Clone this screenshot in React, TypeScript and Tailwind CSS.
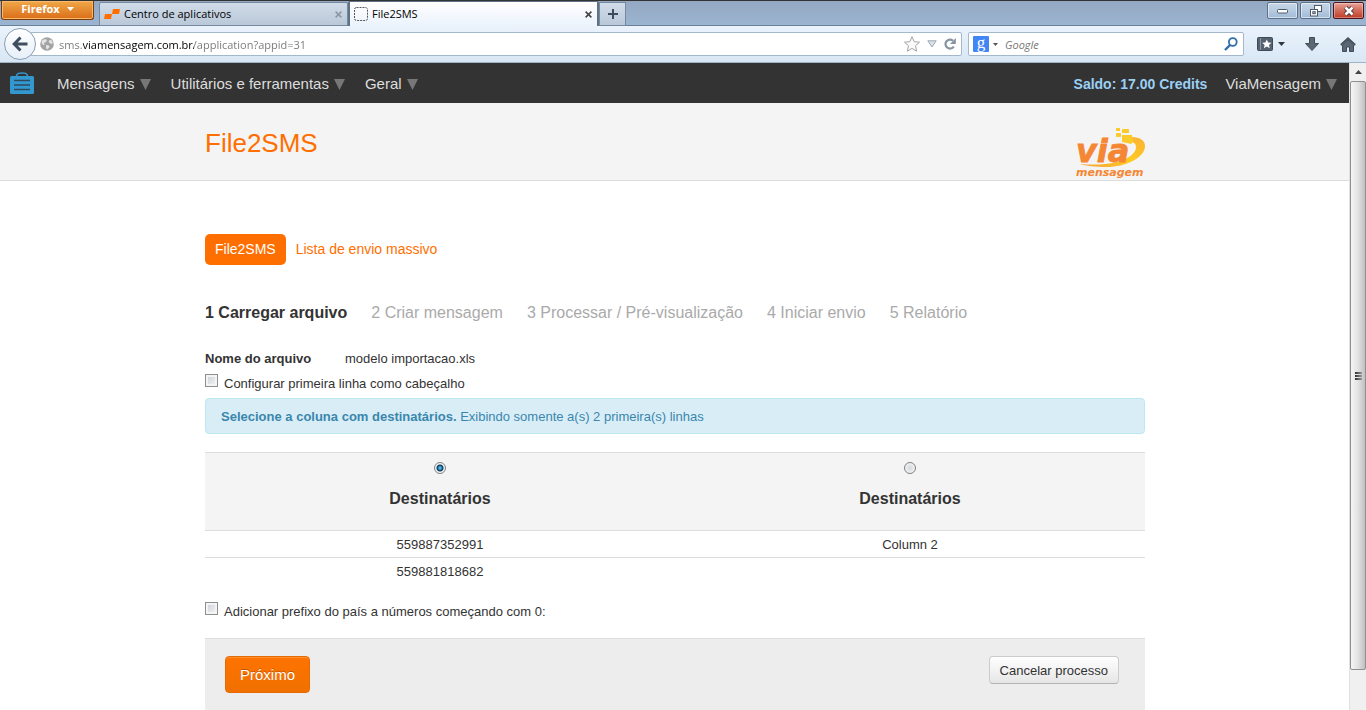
import type { ReactNode } from "react";

const menus = ["Mensagens", "Utilitários e ferramentas", "Geral"];

const steps = [
  "1 Carregar arquivo",
  "2 Criar mensagem",
  "3 Processar / Pré-visualização",
  "4 Iniciar envio",
  "5 Relatório",
];

const rows = [
  ["559887352991", "Column 2"],
  ["559881818682", ""],
];

function Caret({ className }: { className: string }) {
  return (
    <svg viewBox="0 0 10 10" preserveAspectRatio="none" className={className} fill="currentColor">
      <path d="M0 0h10L5 10z" />
    </svg>
  );
}

function WindowButton({ label, close, children }: { label: string; close?: boolean; children: ReactNode }) {
  return (
    <button
      aria-label={label}
      className={
        close
          ? "flex h-[17px] w-[31px] items-center justify-center rounded-[2px] border border-[#4a1420] bg-linear-to-b from-[#e6a499] via-[#d4705f] via-45% to-[#bf3a24] shadow-[inset_0_0_0_1px_#ffffff55]"
          : "flex h-[17px] w-[31px] items-center justify-center rounded-[2px] border border-[#5c6f88] bg-linear-to-b from-[#c6d5e6] via-[#b9cce2] via-45% to-[#a0bad6] shadow-[inset_0_0_0_1px_#ffffff88]"
      }
    >
      {children}
    </button>
  );
}

function TitleBar() {
  return (
    <div className="flex h-[26px] items-end border-t border-[#333] bg-linear-to-b from-[#94a8c2] to-[#9bb5d2] text-[11px] text-black shadow-[inset_0_-1px_0_#6b7f95]">
      <button className="mr-[5px] ml-px flex h-[19px] w-[93px] items-center justify-center gap-[7px] self-start rounded-b-[3px] border border-t-0 border-[#7a3d10] bg-linear-to-b from-[#f0a848] to-[#d96d14] pb-[2px] text-[11px] font-bold text-white shadow-[inset_0_0_0_1px_#f7b96a]">
        Firefox
        <Caret className="h-1 w-[7px]" />
      </button>
      <div className="flex h-6 w-[249px] items-center rounded-t-[2px] border border-[#77899f] bg-linear-to-b from-[#d1dce9] to-[#b9c8d8] pr-[5px] pl-1">
        <svg viewBox="0 0 16 12" className="mr-1 h-3 w-4" fill="#ff6f00">
          <path d="M9 1h7l-1 5H8zM1 6h7l-1 5H0z" />
        </svg>
        <span className="flex-1">Centro de aplicativos</span>
        <CloseIcon className="size-[7px] text-[#8d98a5]" />
      </div>
      <div className="flex h-[25px] w-[251px] items-center rounded-t-[2px] border-x-2 border-t border-[#5f7288] bg-linear-to-b from-white to-[#ebf3fc] pr-[5px] pl-1">
        <svg viewBox="0 0 14 14" className="mr-1 size-[14px]" fill="none" stroke="#555" strokeDasharray="2 1">
          <rect x=".5" y=".5" width="13" height="13" rx="2" />
        </svg>
        <span className="flex-1">File2SMS</span>
        <CloseIcon className="size-[7px] text-[#444]" />
      </div>
      <button aria-label="Nova aba" className="flex h-6 w-[27px] items-center justify-center border border-[#77899f] bg-linear-to-b from-[#d1dce9] to-[#b9c8d8]">
        <svg viewBox="0 0 10 10" className="size-[10px]" stroke="#3c4c5c" strokeWidth="2">
          <path d="M0 5h10M5 0v10" />
        </svg>
      </button>
      <div className="flex flex-1 justify-end gap-[2px] self-start pt-px pr-[2px]">
        <WindowButton label="Minimizar">
          <svg viewBox="0 0 12 6" className="h-[6px] w-3">
            <rect x=".5" y="1.5" width="10" height="3.5" rx="1" fill="#fff" stroke="#4e5a68" />
          </svg>
        </WindowButton>
        <WindowButton label="Restaurar">
          <svg viewBox="0 0 12 12" className="size-3" fill="none">
            <rect x="4.500" y=".5" width="7" height="6" stroke="#4e5a68" fill="#fff" />
            <rect x=".5" y="4.500" width="7" height="6.500" stroke="#4e5a68" fill="#fff" />
            <rect x="2.800" y="6.700" width="2.400" height="2" stroke="#4e5a68" fill="#b9cce2" />
          </svg>
        </WindowButton>
        <WindowButton label="Fechar" close>
          <svg viewBox="0 0 12 10" className="h-[10px] w-3" fill="none">
            <path d="M2.500 1.500l7 7M9.500 1.500l-7 7" stroke="#4b3238" strokeWidth="4.500" />
            <path d="M2.500 1.500l7 7M9.500 1.500l-7 7" stroke="#fff" strokeWidth="2.600" />
          </svg>
        </WindowButton>
      </div>
    </div>
  );
}

function CloseIcon({ className }: { className: string }) {
  return (
    <svg viewBox="0 0 8 8" className={className} stroke="currentColor" strokeWidth="1.8">
      <path d="M.7.7l6.600 6.600M7.300.7L.7 7.300" />
    </svg>
  );
}

function ToolBar() {
  return (
    <div className="flex h-[37px] items-center border-b border-[#9fb4c9] bg-linear-to-b from-[#ebf3fc] to-[#d9e7f5] pr-[10px] pl-1">
      <button aria-label="Voltar" className="z-10 flex size-8 shrink-0 items-center justify-center rounded-full border border-[#8a9db3] bg-linear-to-b from-white to-[#e6eff9]">
        <svg viewBox="0 0 16 16" className="size-4" fill="none" stroke="#3f4e5e" strokeWidth="3">
          <path d="M15.500 8H3M8.500 1.500L2.200 8l6.300 6.500" />
        </svg>
      </button>
      <div className="-ml-[6px] flex h-6 flex-1 items-center rounded-[2px] border border-[#a4b7cb] bg-white pr-[5px] pl-[9px]">
        <svg viewBox="0 0 14 14" className="mr-[5px] size-[14px] shrink-0">
          <circle cx="7" cy="7" r="6.800" fill="#a3a3a3" />
          <path d="M2 3.500L5 2l2 1-1 2-2 1 .5 2L3 8 1.500 6zM8.500 4l2.500-1.500L13 6l-1.500 1-2-1zM6 8l3 .5.500 1.500L7.500 12.500 6 11z" fill="#e4e4e4" />
        </svg>
        <input
          aria-label="Endereço"
          defaultValue="sms.viamensagem.com.br/application?appid=31"
          className="h-5 min-w-0 flex-1 bg-[linear-gradient(to_right,#777_24px,#000_24px,#000_135px,#777_135px)] bg-clip-text text-[11px] text-transparent outline-none"
        />
        <svg viewBox="0 0 16 16" className="mr-[7px] size-4" fill="#fafafa" stroke="#a4a4a4">
          <path d="M8 .7l2.200 5 5.300.5-4 3.600 1.200 5.400L8 12.400l-4.700 2.800 1.200-5.400-4-3.600 5.300-.5z" />
        </svg>
        <svg viewBox="0 0 10 8" className="mr-[7px] h-2 w-[10px]" fill="#dce2e8" stroke="#9ba7b4">
          <path d="M.8.8h8.400L5 7z" />
        </svg>
        <svg viewBox="0 0 12 12" className="size-3" fill="none">
          <path d="M9.800 8.500A4.500 4.500 0 1 1 9 2.700" stroke="#8794a1" strokeWidth="2.200" />
          <path d="M11.800 0v6H6z" fill="#8794a1" />
        </svg>
      </div>
      <div className="ml-[6px] flex h-6 w-[276px] items-center rounded-[2px] border border-[#a4b7cb] bg-white pr-[5px] pl-1">
        <div className="flex size-4 items-center justify-center rounded-[1px] bg-[#4285f4] font-['Liberation_Serif',serif] text-[17px] leading-none text-white">
          <span className="pb-1">g</span>
        </div>
        <Caret className="mr-[7px] ml-1 h-[3px] w-[5px] text-[#555]" />
        <input aria-label="Pesquisar" placeholder="Google" className="h-5 min-w-0 flex-1 text-[11px] italic outline-none placeholder:text-[#777]" />
        <svg viewBox="0 0 14 14" className="size-[14px]" fill="none" stroke="#2f6ea8">
          <circle cx="8.800" cy="5" r="3.900" strokeWidth="1.800" />
          <path d="M6 8L1 13" strokeWidth="2.400" />
        </svg>
      </div>
      <button aria-label="Favoritos" className="ml-[13px] flex items-center gap-[5px]">
        <svg viewBox="0 0 16 14" className="h-[14px] w-4">
          <rect x=".5" y=".5" width="15" height="13" rx="1" fill="#56626f" stroke="#3e4a57" />
          <path d="M3.500 1v12" stroke="#8d99a6" />
          <path d="M9.800 2.500l1.400 3 3.200.3-2.400 2.200.7 3.300-2.900-1.700-2.900 1.700.7-3.300-2.400-2.200 3.200-.3z" fill="#fff" />
        </svg>
        <Caret className="h-1 w-[7px] text-[#2d3742]" />
      </button>
      <button aria-label="Downloads" className="ml-5">
        <svg viewBox="0 0 14 14" className="size-[14px]" fill="#5b6774" stroke="#414d59">
          <path d="M4.500.5h5v6h4L7 13.500.5 6.500h4z" />
        </svg>
      </button>
      <button aria-label="Página inicial" className="ml-[21px]">
        <svg viewBox="0 0 16 15" className="h-[15px] w-4">
          <path d="M2.500 8L8 3l5.500 5v6.500h-4V10h-3v4.500h-4z" fill="#5b6774" stroke="#414d59" />
          <path d="M.8 8L8 1.300 15.200 8" fill="none" stroke="#414d59" strokeWidth="1.800" />
        </svg>
      </button>
    </div>
  );
}

function NavBar() {
  return (
    <nav className="flex h-10 items-center bg-[#333] pt-[2px] pr-3 pl-[10px] text-[15px] text-[#ddd]">
      <a href="#" aria-label="Início" className="mr-[23px] pb-[2px]">
        <svg viewBox="0 0 24 22" className="h-[22px] w-6">
          <path d="M6.500 4C7 1 9 1 12 1s5 0 5.500 3" fill="none" stroke="#3498d0" strokeWidth="1.600" />
          <rect y="4" width="24" height="18" rx="1.500" fill="#3498d0" />
          <path d="M4 8.500h16M4 13h16M4 17.500h16" stroke="#2b4a5c" strokeWidth="1.600" />
        </svg>
      </a>
      {menus.map((menu) => (
        <a key={menu} href="#" className="mr-5 flex items-center gap-[5px]">
          {menu}
          <Caret className="size-[11px] text-[#777]" />
        </a>
      ))}
      <span className="mr-[18px] ml-auto text-sm font-bold text-[#9bd0f5]">Saldo: 17.00 Credits</span>
      <a href="#" className="flex items-center gap-[5px]">
        ViaMensagem
        <Caret className="size-[11px] text-[#777]" />
      </a>
    </nav>
  );
}

function Logo() {
  return (
    <svg viewBox="0 0 70 54" className="h-[54px] w-[70px]" role="img" aria-label="via mensagem">
      <defs>
        <linearGradient id="swoosh" x1="1" y1="0" x2="0" y2="1">
          <stop offset="0" stopColor="#fbb034" />
          <stop offset=".5" stopColor="#ffcb20" />
          <stop offset="1" stopColor="#f9a13a" />
        </linearGradient>
      </defs>
      <path d="M56 11c10 0 14 4 14 9 0 12-20 21-38 21-12 0-21-1-27-3 12 1 26 1 36-2 13-3 20-9 20-15 0-3-2-5-6-5z" fill="url(#swoosh)" />
      <g fill="#fdca2c">
        <rect x="41" y="2" width="4" height="3" rx=".5" />
        <rect x="47" y="3" width="7" height="4" rx=".8" />
        <rect x="41" y="7" width="5" height="4" rx=".8" />
        <path d="M47 9h10l1 7-2 2-9-2z" />
      </g>
      <text x="1" y="36" fontSize="32" strokeWidth=".8" className="fill-[#f58634] stroke-[#f58634] font-['DejaVu_Sans',sans-serif] font-bold italic">
        via
        <tspan x="1" y="50" fontSize="11" strokeWidth="0">
          mensagem
        </tspan>
      </text>
    </svg>
  );
}

function CheckRow({ id, label }: { id: string; label: string }) {
  return (
    <div className="flex h-5 items-start gap-[6px]">
      <input
        id={id}
        type="checkbox"
        className="size-[13px] appearance-none border border-[#8e8f8f] bg-linear-to-br from-[#c9ced5] to-[#f6f6f6] shadow-[inset_0_0_0_2px_#f4f4f4]"
      />
      <label htmlFor={id} className="leading-5">
        {label}
      </label>
    </div>
  );
}

function ColumnTable() {
  return (
    <table className="mt-[18px] w-full table-fixed text-center">
      <thead>
        <tr className="h-[78px] border-t border-[#ddd] bg-[#f4f4f4]">
          {[0, 1].map((col) => (
            <th key={col} className="pt-[9px] align-top text-base font-bold">
              <label className="flex flex-col items-center gap-[15px] leading-5">
                <input
                  type="radio"
                  name="coluna"
                  defaultChecked={col === 0}
                  className="size-3 appearance-none rounded-full border border-[#7d8285] bg-[radial-gradient(circle,#d4d7da_0px,#f2f2f2_5px)] checked:bg-[radial-gradient(circle,#7fd0f2_0px,#1f78ab_2px,#0c3350_3px,#f4f4f4_4px)]"
                />
                Destinatários
              </label>
            </th>
          ))}
        </tr>
      </thead>
      <tbody>
        {rows.map((row) => (
          <tr key={row[0]} className="h-[27px] border-t border-[#ddd]">
            {row.map((cell, i) => (
              <td key={i} className="pt-px">
                {cell}
              </td>
            ))}
          </tr>
        ))}
      </tbody>
    </table>
  );
}

function ScrollBar() {
  return (
    <div className="flex w-[17px] flex-col border-l border-[#e0e0e0] bg-[#f0f0f0] pb-10">
      <div className="flex h-[18px] items-center justify-center">
        <svg viewBox="0 0 7 4" className="h-1 w-[7px]" fill="#444">
          <path d="M3.500 0L7 4H0z" />
        </svg>
      </div>
      <div className="flex flex-1 flex-col items-center justify-center gap-px rounded-[2px] border border-[#8f8f8f] bg-linear-to-r from-[#f5f5f5] via-[#e2e2e4] to-[#c0c0c4]">
        <span className="h-[2px] w-[7px] bg-linear-to-r from-[#333] to-[#999]" />
        <span className="h-[2px] w-[7px] bg-linear-to-r from-[#333] to-[#999]" />
        <span className="h-[2px] w-[7px] bg-linear-to-r from-[#333] to-[#999]" />
      </div>
    </div>
  );
}

export default function App() {
  return (
    <div className="flex h-screen flex-col overflow-hidden bg-white font-['Open_Sans',sans-serif]">
      <TitleBar />
      <ToolBar />
      <div className="flex min-h-0 flex-1">
        <div className="flex-1 overflow-hidden font-['Liberation_Sans',Arial,sans-serif] text-[13px] text-[#333]">
          <NavBar />
          <header className="border-b border-[#ddd] bg-[#f4f4f4]">
            <div className="mx-auto flex h-[77px] max-w-[941px] items-end justify-between pl-px">
              <h1 className="self-center pt-[2px] text-[26px] leading-8 text-[#ff6f00]">File2SMS</h1>
              <Logo />
            </div>
          </header>
          <main className="mx-auto max-w-[941px] pt-[53px] pl-px">
            <div className="flex items-center gap-[10px] text-sm text-[#ff6f00]">
              <a href="#" className="rounded-[5px] bg-[#ff6f00] px-[10px] py-[5px] leading-[21px] text-white">
                File2SMS
              </a>
              <a href="#" className="leading-[21px]">
                Lista de envio massivo
              </a>
            </div>
            <ol className="mt-9 flex gap-6 text-base leading-6 text-[#aaa]">
              {steps.map((step, i) => (
                <li key={step} className={i === 0 ? "font-bold text-[#333]" : ""}>
                  {step}
                </li>
              ))}
            </ol>
            <dl className="mt-6 mb-[5px] flex leading-5">
              <dt className="w-[140px] font-bold">Nome do arquivo</dt>
              <dd>modelo importacao.xls</dd>
            </dl>
            <CheckRow id="cabecalho" label="Configurar primeira linha como cabeçalho" />
            <div className="mt-1 rounded border border-[#bce8f1] bg-[#d9edf7] px-[15px] pt-2 pb-[6px] leading-5 text-[#3a87ad]">
              <strong>Selecione a coluna com destinatários.</strong> Exibindo somente a(s) 2 primeira(s) linhas
            </div>
            <ColumnTable />
            <div className="mt-[17px] mb-4">
              <CheckRow id="prefixo" label="Adicionar prefixo do país a números começando com 0:" />
            </div>
            <div className="flex items-start justify-between border-t border-[#ddd] bg-[#ededed] pt-[17px] pr-[26px] pb-10 pl-5">
              <button className="h-[37px] rounded border border-[#e56a00] bg-linear-to-b from-[#ff7300] to-[#f07000] px-[14px] pt-[2px] text-[15px] text-white shadow-[inset_0_1px_0_#ffffff33] text-shadow-[0_-1px_0_#00000040]">
                Próximo
              </button>
              <button className="h-7 rounded border border-[#ccc] border-b-[#b3b3b3] bg-linear-to-b from-white to-[#e6e6e6] px-[10px] pt-[2px]">
                Cancelar processo
              </button>
            </div>
          </main>
        </div>
        <ScrollBar />
      </div>
    </div>
  );
}
